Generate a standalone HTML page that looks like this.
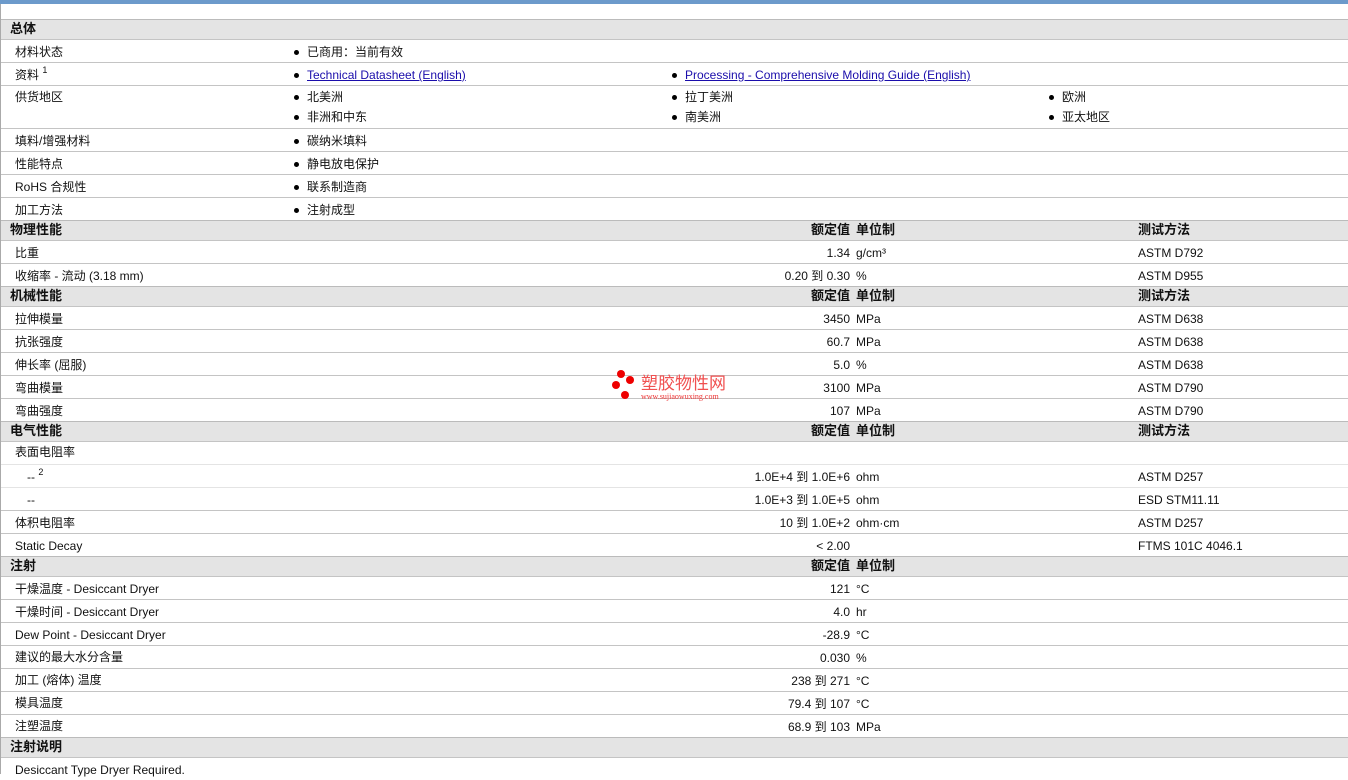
<!DOCTYPE html>
<html><head><meta charset="utf-8"><style>
body{margin:0;width:1348px;height:774px;overflow:hidden;background:#fff;font-family:"Liberation Sans","Noto Sans CJK SC",sans-serif;font-size:12px;color:#111;position:relative}
.top{position:absolute;left:0;top:0;width:1348px;height:4px;background:#6c9acb}
.lb{position:absolute;left:0;top:4px;width:1px;height:770px;background:#aaa}
.r{position:absolute;left:1px;width:1347px;border-top:1px solid #c4c4c4;box-sizing:border-box}
.r.l{border-top-color:#e4e4e4}
.h{background:#e4e4e4;font-weight:bold;font-size:13px;border-top:1px solid #bbb}
.r span{position:absolute;white-space:nowrap;line-height:14px}
.h span{top:2px}
.r:not(.h) span{top:5px}
.v{right:498px;text-align:right}
.u{left:855px}
.t{left:1137px}
.b::before{content:"";position:absolute;left:-13px;top:5px;width:5px;height:5px;border-radius:50%;background:#000}
a{color:#1a0dab;text-decoration:underline}
sup{font-size:9px;vertical-align:6px;line-height:0}
</style></head><body>
<div class="top"></div><div class="lb"></div>

<div class="r h" style="top:19px;height:20px"><span style="left:9px">总体</span></div>
<div class="r" style="top:39px;height:23px"><span style="left:14px">材料状态</span><span class="b" style="left:306px">已商用：当前有效</span></div>
<div class="r" style="top:62px;height:23px"><span style="left:14px">资料 <sup>1</sup></span><span class="b" style="left:306px"><a>Technical Datasheet (English)</a></span><span class="b" style="left:684px"><a>Processing - Comprehensive Molding Guide (English)</a></span></div>
<div class="r" style="top:85px;height:43px"><span style="left:14px;top:4px">供货地区</span>
<span class="b" style="left:306px;top:4px">北美洲</span><span class="b" style="left:684px;top:4px">拉丁美洲</span><span class="b" style="left:1061px;top:4px">欧洲</span>
<span class="b" style="left:306px;top:24px">非洲和中东</span><span class="b" style="left:684px;top:24px">南美洲</span><span class="b" style="left:1061px;top:24px">亚太地区</span></div>
<div class="r" style="top:128px;height:23px"><span style="left:14px">填料/增强材料</span><span class="b" style="left:306px">碳纳米填料</span></div>
<div class="r" style="top:151px;height:23px"><span style="left:14px">性能特点</span><span class="b" style="left:306px">静电放电保护</span></div>
<div class="r" style="top:174px;height:23px"><span style="left:14px">RoHS 合规性</span><span class="b" style="left:306px">联系制造商</span></div>
<div class="r" style="top:197px;height:23px"><span style="left:14px">加工方法</span><span class="b" style="left:306px">注射成型</span></div>

<div class="r h" style="top:220px;height:20px"><span style="left:9px">物理性能</span><span class="v">额定值</span><span class="u">单位制</span><span class="t">测试方法</span></div>
<div class="r" style="top:240px;height:23px"><span style="left:14px">比重</span><span class="v">1.34</span><span class="u">g/cm³</span><span class="t">ASTM D792</span></div>
<div class="r" style="top:263px;height:23px"><span style="left:14px">收缩率 - 流动 (3.18 mm)</span><span class="v">0.20 到 0.30</span><span class="u">%</span><span class="t">ASTM D955</span></div>

<div class="r h" style="top:286px;height:20px"><span style="left:9px">机械性能</span><span class="v">额定值</span><span class="u">单位制</span><span class="t">测试方法</span></div>
<div class="r" style="top:306px;height:23px"><span style="left:14px">拉伸模量</span><span class="v">3450</span><span class="u">MPa</span><span class="t">ASTM D638</span></div>
<div class="r" style="top:329px;height:23px"><span style="left:14px">抗张强度</span><span class="v">60.7</span><span class="u">MPa</span><span class="t">ASTM D638</span></div>
<div class="r" style="top:352px;height:23px"><span style="left:14px">伸长率 (屈服)</span><span class="v">5.0</span><span class="u">%</span><span class="t">ASTM D638</span></div>
<div class="r" style="top:375px;height:23px"><span style="left:14px">弯曲模量</span><span class="v">3100</span><span class="u">MPa</span><span class="t">ASTM D790</span></div>
<div class="r" style="top:398px;height:23px"><span style="left:14px">弯曲强度</span><span class="v">107</span><span class="u">MPa</span><span class="t">ASTM D790</span></div>

<div class="r h" style="top:421px;height:20px"><span style="left:9px">电气性能</span><span class="v">额定值</span><span class="u">单位制</span><span class="t">测试方法</span></div>
<div class="r" style="top:441px;height:23px"><span style="left:14px;top:3px">表面电阻率</span></div>
<div class="r l" style="top:464px;height:23px"><span style="left:26px">-- <sup>2</sup></span><span class="v">1.0E+4 到 1.0E+6</span><span class="u">ohm</span><span class="t">ASTM D257</span></div>
<div class="r l" style="top:487px;height:23px"><span style="left:26px">--</span><span class="v">1.0E+3 到 1.0E+5</span><span class="u">ohm</span><span class="t">ESD STM11.11</span></div>
<div class="r" style="top:510px;height:23px"><span style="left:14px">体积电阻率</span><span class="v">10 到 1.0E+2</span><span class="u">ohm·cm</span><span class="t">ASTM D257</span></div>
<div class="r" style="top:533px;height:23px"><span style="left:14px">Static Decay</span><span class="v">&lt; 2.00</span><span class="t">FTMS 101C 4046.1</span></div>

<div class="r h" style="top:556px;height:20px"><span style="left:9px">注射</span><span class="v">额定值</span><span class="u">单位制</span></div>
<div class="r" style="top:576px;height:23px"><span style="left:14px">干燥温度 - Desiccant Dryer</span><span class="v">121</span><span class="u">°C</span></div>
<div class="r" style="top:599px;height:23px"><span style="left:14px">干燥时间 - Desiccant Dryer</span><span class="v">4.0</span><span class="u">hr</span></div>
<div class="r" style="top:622px;height:23px"><span style="left:14px">Dew Point - Desiccant Dryer</span><span class="v">-28.9</span><span class="u">°C</span></div>
<div class="r" style="top:645px;height:23px"><span style="left:14px;top:4px">建议的最大水分含量</span><span class="v">0.030</span><span class="u">%</span></div>
<div class="r" style="top:668px;height:23px"><span style="left:14px;top:4px">加工 (熔体) 温度</span><span class="v">238 到 271</span><span class="u">°C</span></div>
<div class="r" style="top:691px;height:23px"><span style="left:14px;top:4px">模具温度</span><span class="v">79.4 到 107</span><span class="u">°C</span></div>
<div class="r" style="top:714px;height:23px"><span style="left:14px;top:4px">注塑温度</span><span class="v">68.9 到 103</span><span class="u">MPa</span></div>
<div class="r h" style="top:737px;height:20px"><span style="left:9px">注射说明</span></div>
<div class="r" style="top:757px;height:23px"><span style="left:14px">Desiccant Type Dryer Required.</span></div>

<div style="position:absolute;left:611px;top:370px;width:26px;height:32px">
<div style="position:absolute;left:6px;top:0;width:8px;height:8px;border-radius:50%;background:#e00"></div>
<div style="position:absolute;left:15px;top:6px;width:8px;height:8px;border-radius:50%;background:#e00"></div>
<div style="position:absolute;left:1px;top:11px;width:8px;height:8px;border-radius:50%;background:#e00"></div>
<div style="position:absolute;left:10px;top:21px;width:8px;height:8px;border-radius:50%;background:#e00"></div>
</div>
<div style="position:absolute;left:641px;top:373px;color:#f05050;font-size:17px;line-height:18px;font-family:'Noto Sans CJK SC',sans-serif">塑胶物性网</div>
<div style="position:absolute;left:641px;top:392px;color:#e33;font-size:8px;line-height:9px;font-family:'Liberation Serif',serif">www.sujiaowuxing.com</div>
</body></html>
